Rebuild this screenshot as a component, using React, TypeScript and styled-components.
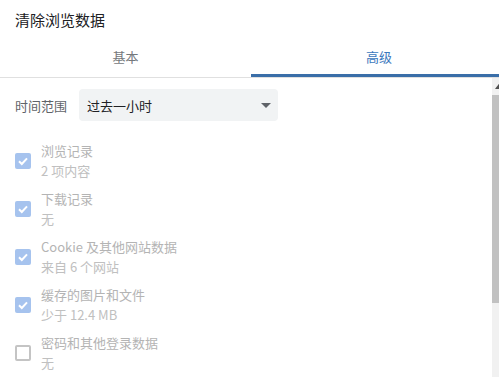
import React from "react";
import styled, { createGlobalStyle } from "styled-components";

const GlobalStyle = createGlobalStyle`
  html, body {
    margin: 0;
    padding: 0;
    overflow: hidden;
    background: #ffffff;
  }
  body {
    font-family: "Noto Sans CJK SC", "Noto Sans", sans-serif;
  }
`;

const Dialog = styled.div`
  width: 507px;
  height: 377px;
  display: flex;
  flex-direction: column;
  background: #ffffff;
`;

const Title = styled.div`
  box-sizing: border-box;
  height: 30px;
  padding: 10px 15px 0;
  font-size: 15px;
  line-height: 20px;
  color: #202124;
`;

const TabBar = styled.div`
  display: grid;
  grid-template-columns: 251px 1fr;
  border-bottom: 1px solid #e0e0e0;
`;

const Tab = styled.div<{ $active?: boolean }>`
  box-sizing: border-box;
  height: 47px;
  padding-top: 17px;
  text-align: center;
  font-size: 13px;
  line-height: 20px;
  color: ${(p) => (p.$active ? "#3b78bd" : "#75787c")};
  box-shadow: ${(p) => (p.$active ? "inset 0 -3px 0 #3a6ea8" : "none")};
`;

const Body = styled.div`
  flex: 1;
  min-height: 0;
  display: flex;
`;

const Content = styled.div`
  flex: 1;
  padding: 11px 0 0 15px;
`;

const Scrollbar = styled.div`
  width: 15px;
  background: #f1f1f1;
  display: flex;
  flex-direction: column;
`;

const ScrollButton = styled.div`
  height: 15px;
  display: flex;
  align-items: center;
  justify-content: center;
`;

const Thumb = styled.div`
  margin-top: 2px;
  height: 208px;
  background: #c1c1c1;
`;

const TimeRow = styled.div`
  display: flex;
  align-items: center;
  gap: 12px;
  height: 32px;
`;

const Label = styled.div`
  font-size: 13px;
  color: #5f6368;
`;

const Select = styled.div`
  box-sizing: border-box;
  width: 199px;
  height: 32px;
  padding: 0 7px 0 8px;
  display: flex;
  align-items: center;
  justify-content: space-between;
  background: #f1f3f4;
  border-radius: 4px;
  font-size: 13px;
  color: #202124;
`;

const Caret = styled.span`
  width: 0;
  height: 0;
  border-left: 5px solid transparent;
  border-right: 5px solid transparent;
  border-top: 5px solid #5f6368;
`;

const List = styled.div`
  margin-top: 16px;
`;

const Row = styled.div`
  display: flex;
  align-items: center;
  gap: 10px;
  height: 48px;
`;

const Box = styled.div<{ $checked?: boolean }>`
  box-sizing: border-box;
  width: 16px;
  height: 16px;
  border-radius: 2px;
  display: flex;
  align-items: center;
  justify-content: center;
  background: ${(p) => (p.$checked ? "#a6c3ee" : "transparent")};
  border: ${(p) => (p.$checked ? "none" : "2px solid #c4c4c4")};
`;

const Texts = styled.div`
  font-size: 13px;
  line-height: 20px;
`;

const Main = styled.div`
  color: #b4b4b4;
`;

const Sub = styled.div`
  color: #c0c0c0;
`;

const items = [
  { label: "浏览记录", sub: "2 项内容", checked: true },
  { label: "下载记录", sub: "无", checked: true },
  { label: "Cookie 及其他网站数据", sub: "来自 6 个网站", checked: true },
  { label: "缓存的图片和文件", sub: "少于 12.4 MB", checked: true },
  { label: "密码和其他登录数据", sub: "无", checked: false },
];

export default function App() {
  return (
    <>
      <GlobalStyle />
      <Dialog>
        <Title>清除浏览数据</Title>
        <TabBar>
          <Tab>基本</Tab>
          <Tab $active>高级</Tab>
        </TabBar>
        <Body>
          <Content>
            <TimeRow>
              <Label>时间范围</Label>
              <Select>
                <span>过去一小时</span>
                <Caret />
              </Select>
            </TimeRow>
            <List>
              {items.map((it) => (
                <Row key={it.label}>
                  <Box $checked={it.checked}>
                    {it.checked && (
                      <svg width="12" height="12" viewBox="0 0 12 12">
                        <path
                          d="M2 6.2 L4.8 9 L10 3.3"
                          fill="none"
                          stroke="#ffffff"
                          strokeWidth="2"
                        />
                      </svg>
                    )}
                  </Box>
                  <Texts>
                    <Main>{it.label}</Main>
                    <Sub>{it.sub}</Sub>
                  </Texts>
                </Row>
              ))}
            </List>
          </Content>
          <Scrollbar>
            <ScrollButton>
              <svg width="9" height="6" viewBox="0 0 9 6">
                <path d="M4.5 0 L9 6 L0 6 Z" fill="#505050" />
              </svg>
            </ScrollButton>
            <Thumb />
          </Scrollbar>
        </Body>
      </Dialog>
    </>
  );
}
